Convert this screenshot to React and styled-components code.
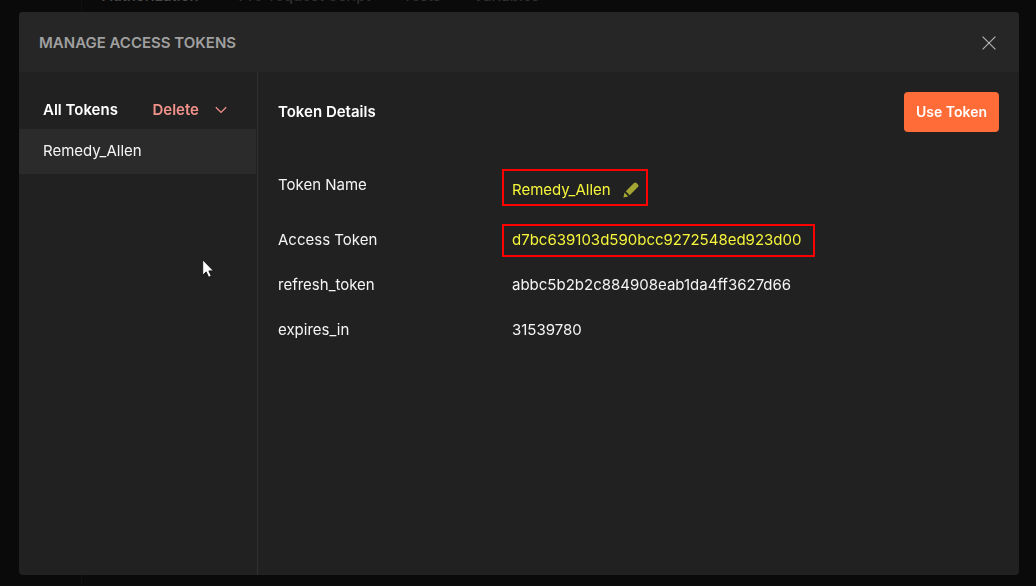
import styled, { createGlobalStyle } from "styled-components";

const GlobalStyle = createGlobalStyle`
  * {
    box-sizing: border-box;
  }

  body {
    margin: 0;
    background-color: #0a0a0a;
    color: #f5f5f5;
    font-family: Inter, "Liberation Sans", sans-serif;
    font-size: 15px;
    line-height: 20px;
  }

  h1, h2, h3, ul, dl, dd, dt {
    margin: 0;
    padding: 0;
    font-size: inherit;
  }

  button {
    border: none;
    padding: 0;
    background: none;
    color: inherit;
    font: inherit;
    cursor: pointer;
  }
`;

const Workspace = styled.div`
  display: grid;
  grid-template-columns: 81px 1fr;
  height: 100vh;
  overflow: hidden;
`;

const WorkspaceMain = styled.div`
  border-left: 1px solid #101010;
`;

const RequestTabs = styled.nav`
  display: flex;
  gap: 32px;
  margin-top: -14px;
  padding-left: 20px;
`;

const RequestTab = styled.a`
  padding-right: ${({ $active }) => ($active ? "8px" : "0")};
  color: ${({ $active }) => ($active ? "#4a4a4a" : "#303030")};
  font-weight: 500;
  text-decoration: none;
`;

const Overlay = styled.div`
  position: fixed;
  inset: 0;
  display: flex;
  padding: 12px 17px 11px 19px;
`;

const Modal = styled.section`
  display: flex;
  flex: 1;
  flex-direction: column;
  overflow: hidden;
  border-radius: 4px;
  background-color: #212121;
`;

const ModalHeader = styled.header`
  display: flex;
  align-items: center;
  justify-content: space-between;
  height: 60px;
  padding: 1px 20px 0;
  background-color: #262626;
`;

const ModalTitle = styled.h1`
  color: #a0a0a0;
  font-weight: 600;
`;

const CloseButton = styled.button`
  display: grid;
  place-items: center;
  width: 20px;
  height: 20px;
  color: #b0b0b0;
`;

const ModalBody = styled.div`
  display: grid;
  flex: 1;
  grid-template-columns: 239px 1fr;
`;

const Sidebar = styled.aside`
  padding-top: 28px;
  padding-right: 1px;
  border-right: 1px solid #303030;
`;

const SidebarHeader = styled.div`
  display: flex;
  align-items: center;
  justify-content: space-between;
  padding: 0 29px 9px 24px;
`;

const Heading = styled.h2`
  color: #ffffff;
  font-weight: 600;
`;

const DeleteButton = styled.button`
  display: flex;
  align-items: center;
  gap: 16px;
  color: #f0918a;
  font-weight: 600;
`;

const TokenList = styled.ul`
  list-style: none;
`;

const TokenItem = styled.button`
  display: block;
  width: 100%;
  height: 45px;
  padding: 0 24px 2px;
  background-color: #2b2b2b;
  text-align: left;
`;

const Details = styled.div`
  padding: 20px;
`;

const DetailsHeader = styled.div`
  display: flex;
  align-items: center;
  justify-content: space-between;
  margin-bottom: 30px;
`;

const UseButton = styled.button`
  height: 40px;
  padding: 0 12px;
  border-radius: 4px;
  background-color: #ff6c37;
  color: #ffffff;
  font-size: 14px;
  font-weight: 600;
`;

const Row = styled.div`
  display: grid;
  grid-template-columns: 224px 1fr;
  align-items: start;
  min-height: ${({ $tall }) => ($tall ? "55px" : "45px")};
`;

const Label = styled.dt`
  line-height: 45px;
`;

const Value = styled.dd`
  display: flex;
  padding-top: 7px;
`;

const ValueBox = styled.span`
  display: flex;
  align-items: center;
  gap: 12px;
  padding: ${({ $tall }) => ($tall ? "9px 7px 4px 8px" : "4px 12px 5px 8px")};
  border: 2px solid ${({ $marked }) => ($marked ? "#ff0000" : "transparent")};
  color: ${({ $marked }) => ($marked ? "#f5f53c" : "inherit")};
`;

const EditButton = styled.button`
  display: flex;
  color: #a5a534;
`;

const Pointer = styled.svg`
  position: absolute;
  top: 259px;
  left: 202px;
`;

const tabs = ["Authorization", "Pre-request Script", "Tests", "Variables"];

const fields = [
  { label: "Token Name", value: "Remedy_Allen", marked: true, editable: true },
  {
    label: "Access Token",
    value: "d7bc639103d590bcc9272548ed923d00",
    marked: true,
  },
  { label: "refresh_token", value: "abbc5b2b2c884908eab1da4ff3627d66" },
  { label: "expires_in", value: "31539780" },
];

const CloseIcon = () => (
  <svg width="14" height="14" viewBox="0 0 14 14" fill="none" aria-hidden="true">
    <path d="M.6.6l12.8 12.8M13.4.6L.6 13.4" stroke="currentColor" strokeWidth="1.2" />
  </svg>
);

const ChevronIcon = () => (
  <svg width="12" height="8" viewBox="0 0 12 8" fill="none" aria-hidden="true">
    <path d="M.8 1.2L6 6.4l5.2-5.2" stroke="currentColor" strokeWidth="1.3" />
  </svg>
);

const PencilIcon = () => (
  <svg width="16" height="16" viewBox="0 0 16 16" fill="currentColor" aria-hidden="true">
    <path d="M.4 15.6l1.1-5 3.9 3.9z" />
    <path d="M2.8 9.3L11 1.1a1.8 1.8 0 0 1 2.5 0l1.4 1.4a1.8 1.8 0 0 1 0 2.5l-8.2 8.2z" />
  </svg>
);

const TokenField = ({ field }) => {
  const { label, value, marked, editable } = field;

  return (
    <Row $tall={editable}>
      <Label>{label}</Label>
      <Value>
        <ValueBox $marked={marked} $tall={editable}>
          {value}
          {editable && (
            <EditButton aria-label="Edit token name">
              <PencilIcon />
            </EditButton>
          )}
        </ValueBox>
      </Value>
    </Row>
  );
};

const App = () => {
  return (
    <>
      <GlobalStyle />
      <Workspace>
        <div />
        <WorkspaceMain>
          <RequestTabs>
            {tabs.map((tab, i) => (
              <RequestTab key={tab} href="#" $active={i === 0}>
                {tab}
              </RequestTab>
            ))}
          </RequestTabs>
        </WorkspaceMain>
      </Workspace>
      <Overlay>
        <Modal role="dialog" aria-labelledby="modal-title">
          <ModalHeader>
            <ModalTitle id="modal-title">MANAGE ACCESS TOKENS</ModalTitle>
            <CloseButton aria-label="Close">
              <CloseIcon />
            </CloseButton>
          </ModalHeader>
          <ModalBody>
            <Sidebar>
              <SidebarHeader>
                <Heading>All Tokens</Heading>
                <DeleteButton>
                  Delete
                  <ChevronIcon />
                </DeleteButton>
              </SidebarHeader>
              <TokenList>
                <li>
                  <TokenItem>Remedy_Allen</TokenItem>
                </li>
              </TokenList>
            </Sidebar>
            <Details>
              <DetailsHeader>
                <Heading>Token Details</Heading>
                <UseButton>Use Token</UseButton>
              </DetailsHeader>
              <dl>
                {fields.map((field) => (
                  <TokenField key={field.label} field={field} />
                ))}
              </dl>
            </Details>
          </ModalBody>
        </Modal>
        <Pointer width="12" height="19" viewBox="0 0 12 19" aria-hidden="true">
          <path
            d="M.7.8v15.4l3.5-3.3 2.4 5.4 2.7-1.2-2.4-5.2h4.6z"
            fill="#ffffff"
            stroke="#111111"
            strokeWidth=".9"
          />
        </Pointer>
      </Overlay>
    </>
  );
};

export default App;
